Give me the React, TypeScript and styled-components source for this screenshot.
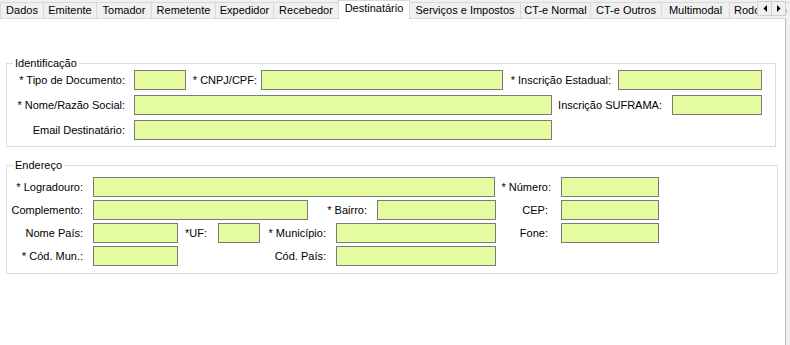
import React from "react";
import styled, { createGlobalStyle } from "styled-components";

const Global = createGlobalStyle`
  html, body { margin: 0; padding: 0; background: #f0f0f0; }
  body { font-family: "Liberation Sans", Arial, sans-serif; font-size: 11px; color: #000; }
  * { box-sizing: border-box; }
`;

const Window = styled.div`
  width: 790px;
  height: 345px;
  display: flex;
  flex-direction: column;
  background: #f0f0f0;
  overflow: hidden;
`;

const TabStrip = styled.div`
  position: relative;
  display: flex;
  align-items: flex-end;
  height: 18px;
  width: 786px;
  flex: none;
`;

const Tab = styled.div<{ $w: number; $first?: boolean; $start?: boolean }>`
  flex: none;
  width: ${(p) => p.$w}px;
  height: 16px;
  background: #f0f0f0;
  border-top: 1px solid #d9d9d9;
  border-right: 1px solid #d9d9d9;
  border-left: ${(p) => (p.$first ? "1px solid #d9d9d9" : "none")};
  display: flex;
  align-items: center;
  justify-content: ${(p) => (p.$start ? "flex-start" : "center")};
  padding-left: ${(p) => (p.$start ? "4px" : "0")};
  white-space: nowrap;
  overflow: hidden;
  line-height: 13px;
  padding-bottom: 1px;
`;

const ActiveTab = styled.div<{ $w: number }>`
  position: relative;
  z-index: 2;
  flex: none;
  width: ${(p) => p.$w}px;
  height: 19px;
  margin-bottom: -1px;
  margin-left: -1px;
  background: #fff;
  border: 1px solid #d9d9d9;
  border-bottom: none;
  display: flex;
  align-items: flex-start;
  justify-content: center;
  padding-top: 1px;
  white-space: nowrap;
  line-height: 13px;
`;

const Scroller = styled.div`
  position: absolute;
  right: 0;
  top: 1px;
  display: flex;
  z-index: 3;
`;

const ScrollButton = styled.div`
  width: 15px;
  height: 15px;
  background: #f0f0f0;
  border: 1px solid #d0d0d0;
  margin-left: -1px;
  display: flex;
  align-items: center;
  justify-content: center;
`;

const Panel = styled.div`
  flex: 1;
  width: 786px;
  background: #fff;
  border-top: 1px solid #d9d9d9;
  border-right: 1px solid #b9b9b9;
  padding-left: 6px;
`;

const Group = styled.fieldset<{ $top: number; $w: number; $pt: number; $pb: number; $gap: number }>`
  margin: ${(p) => p.$top}px 0 0 0;
  width: ${(p) => p.$w}px;
  border: 1px solid #dcdcdc;
  padding: ${(p) => p.$pt}px 0 ${(p) => p.$pb}px 0;
  display: flex;
  flex-direction: column;
  gap: ${(p) => p.$gap}px;
  min-width: 0;
`;

const Legend = styled.legend`
  margin-left: 6px;
  padding: 0 2px;
  line-height: 13px;
  font-size: 11px;
`;

const Row = styled.div`
  display: flex;
  align-items: center;
  height: 20px;
`;

const Label = styled.label<{ $w: number }>`
  flex: none;
  width: ${(p) => p.$w}px;
  text-align: right;
  white-space: nowrap;
  line-height: 13px;
`;

const Input = styled.input<{ $w: number; $ml: number }>`
  flex: none;
  width: ${(p) => p.$w}px;
  height: 20px;
  margin: 0 0 0 ${(p) => p.$ml}px;
  padding: 0 3px;
  border: 1px solid #7a7a7a;
  background: #e4fba0;
  font: inherit;
  outline: none;
`;

type F = { l: string; lw: number; ml: number; iw: number };

const Fields: React.FC<{ items: F[] }> = ({ items }) => (
  <Row>
    {items.map((f, i) => (
      <React.Fragment key={i}>
        <Label $w={f.lw}>{f.l}</Label>
        <Input $w={f.iw} $ml={f.ml} />
      </React.Fragment>
    ))}
  </Row>
);

const tabs: [string, number][] = [
  ["Dados", 44],
  ["Emitente", 53],
  ["Tomador", 55],
  ["Remetente", 64],
  ["Expedidor", 58],
  ["Recebedor", 65],
];
const tabs2: [string, number][] = [
  ["Serviços e Impostos", 111],
  ["CT-e Normal", 70],
  ["CT-e Outros", 71],
  ["Multimodal", 68],
];

const Arrow: React.FC<{ dir: "l" | "r" }> = ({ dir }) => (
  <svg width="4" height="7" viewBox="0 0 4 7">
    {dir === "l" ? <polygon points="4,0 4,7 0.5,3.5" fill="#000" /> : <polygon points="0,0 0,7 3.5,3.5" fill="#000" />}
  </svg>
);

export default function App() {
  return (
    <Window>
      <Global />
      <TabStrip>
        {tabs.map(([t, w], i) => (
          <Tab key={t} $w={w} $first={i === 0}>
            {t}
          </Tab>
        ))}
        <ActiveTab $w={72}>Destinatário</ActiveTab>
        {tabs2.map(([t, w]) => (
          <Tab key={t} $w={w}>
            {t}
          </Tab>
        ))}
        <Tab $w={70} $start>
          Rodoviário
        </Tab>
        <Scroller>
          <ScrollButton>
            <Arrow dir="l" />
          </ScrollButton>
          <ScrollButton>
            <Arrow dir="r" />
          </ScrollButton>
        </Scroller>
      </TabStrip>
      <Panel>
        <Group $top={38} $w={770} $pt={0} $pb={6} $gap={5}>
          <Legend>Identificação</Legend>
          <Fields
            items={[
              { l: "* Tipo de Documento:", lw: 118, ml: 9, iw: 52 },
              { l: "* CNPJ/CPF:", lw: 71, ml: 4, iw: 242 },
              { l: "* Inscrição Estadual:", lw: 108, ml: 7, iw: 144 },
            ]}
          />
          <Fields
            items={[
              { l: "* Nome/Razão Social:", lw: 118, ml: 9, iw: 418 },
              { l: "Inscrição SUFRAMA:", lw: 110, ml: 10, iw: 90 },
            ]}
          />
          <Fields items={[{ l: "Email Destinatário:", lw: 118, ml: 9, iw: 418 }]} />
        </Group>
        <Group $top={12} $w={772} $pt={5} $pb={7} $gap={3}>
          <Legend>Endereço</Legend>
          <Fields
            items={[
              { l: "* Logradouro:", lw: 76, ml: 10, iw: 402 },
              { l: "* Número:", lw: 56, ml: 10, iw: 98 },
            ]}
          />
          <Fields
            items={[
              { l: "Complemento:", lw: 76, ml: 10, iw: 215 },
              { l: "* Bairro:", lw: 59, ml: 10, iw: 119 },
              { l: "CEP:", lw: 52, ml: 13, iw: 98 },
            ]}
          />
          <Fields
            items={[
              { l: "Nome País:", lw: 76, ml: 10, iw: 85 },
              { l: "*UF:", lw: 29, ml: 11, iw: 42 },
              { l: "* Município:", lw: 66, ml: 10, iw: 160 },
              { l: "Fone:", lw: 52, ml: 13, iw: 98 },
            ]}
          />
          <Fields
            items={[
              { l: "* Cód. Mun.:", lw: 76, ml: 10, iw: 85 },
              { l: "Cód. País:", lw: 148, ml: 10, iw: 160 },
            ]}
          />
        </Group>
      </Panel>
    </Window>
  );
}
